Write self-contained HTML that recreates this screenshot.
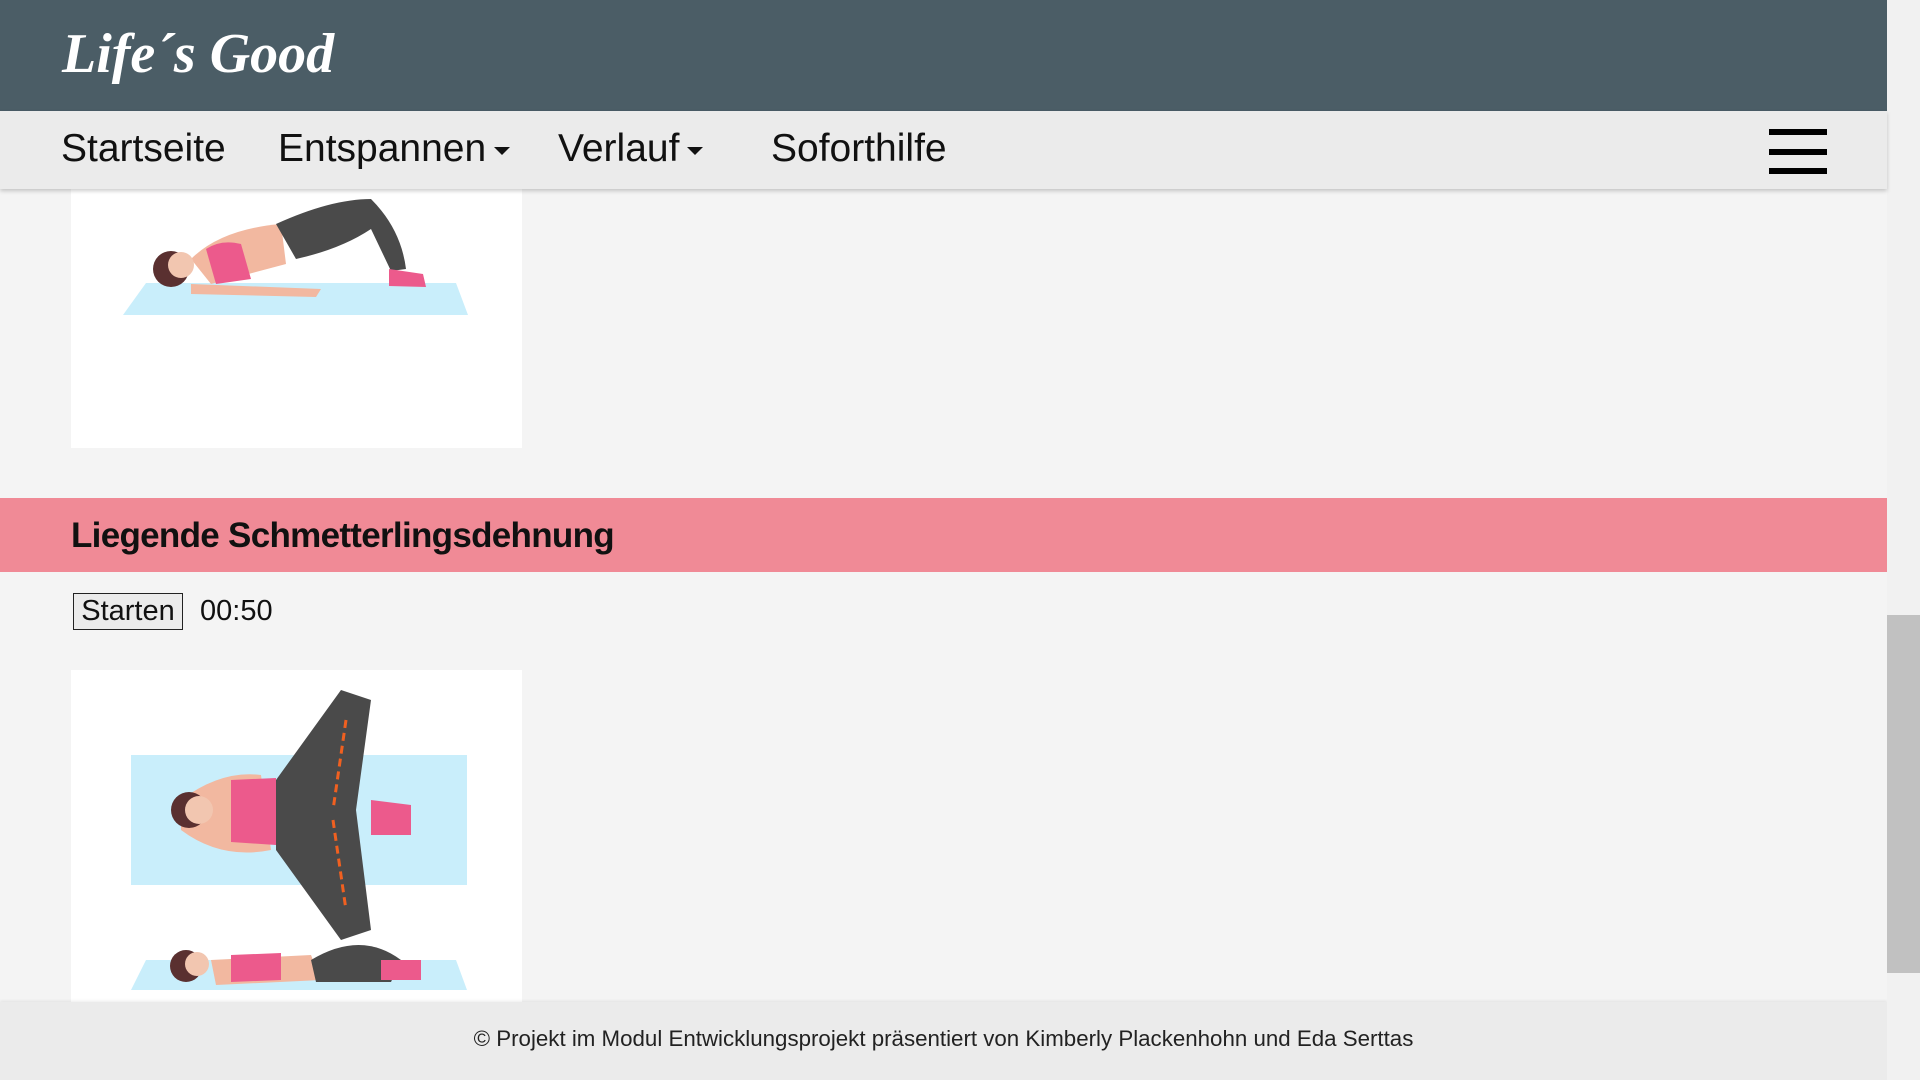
<!DOCTYPE html>
<html><head><meta charset="utf-8"><style>
*{margin:0;padding:0;box-sizing:border-box}
body{width:1920px;height:1080px;overflow:hidden;background:#f4f4f4;font-family:"Liberation Sans",sans-serif;position:relative}
.hd{position:absolute;left:0;top:0;width:1887px;height:111px;background:#4b5d66}
.logo{position:absolute;left:62px;top:22px;color:#fff;font:italic bold 56px "Liberation Serif",serif;letter-spacing:0px}
.nav{position:absolute;left:0;top:111px;width:1887px;height:78px;background:#ebebeb;box-shadow:0 2px 4px rgba(0,0,0,.2);z-index:2}
.nav span{position:absolute;top:16px;font-size:39px;color:#111}
.car{display:inline-block;width:0;height:0;border-left:8px solid transparent;border-right:8px solid transparent;border-top:8px solid #111;vertical-align:middle;margin-left:8px}
.bar{position:absolute;left:1769px;width:58px;height:6px;background:#000}
.img{position:absolute;left:71px;width:451px;background:#fff}
.band{position:absolute;left:0;top:498px;width:1887px;height:74px;background:#f08a96}
.band h2{position:absolute;left:71px;top:18px;font-size:35px;font-weight:bold;color:#111;letter-spacing:-0.7px}
.btn{position:absolute;left:73px;top:593px;width:110px;height:37px;border:1.5px solid #222;background:#ebebeb;font-size:29px;text-align:center;line-height:34px;color:#111}
.time{position:absolute;left:200px;top:595px;font-size:29px;color:#111}
.ft{position:absolute;left:0;top:1002px;width:1887px;height:78px;background:#ebebeb;text-align:center;font-size:22.3px;color:#222;line-height:74px;box-shadow:0 -1px 3px rgba(0,0,0,.08)}
.sb{position:absolute;right:0;top:0;width:33px;height:1080px;background:#f1f1f1}
.th{position:absolute;right:0;top:615px;width:33px;height:358px;background:#c1c1c1}
</style></head><body>
<div class="hd"><div class="logo">Life´s Good</div></div>
<div class="nav">
<span style="left:61px">Startseite</span>
<span style="left:278px">Entspannen<i class="car"></i></span>
<span style="left:558px">Verlauf<i class="car"></i></span>
<span style="left:771px">Soforthilfe</span>
<div class="bar" style="top:18px"></div><div class="bar" style="top:38px"></div><div class="bar" style="top:57px"></div>
</div>
<div class="img" style="top:189px;height:259px">
<svg width="451" height="259">
<polygon points="52,126 397,126 385,94 75,94" fill="#c9eefb"/>
<path d="M120,70 Q150,40 210,35 L215,75 L140,95 Z" fill="#f2b8a0"/>
<path d="M135,60 Q150,50 170,55 L180,90 L145,95 Z" fill="#ec5a8c"/>
<path d="M205,35 Q260,10 300,10 Q330,40 335,80 L320,82 L300,40 Q270,60 225,70 Z" fill="#4a4a4a"/>
<path d="M120,95 L250,100 L245,108 L120,105 Z" fill="#f2b8a0"/>
<path d="M318,80 L352,85 L355,98 L318,97 Z" fill="#ec5a8c"/>
<circle cx="100" cy="80" r="18" fill="#5a3030"/>
<circle cx="110" cy="76" r="13" fill="#f2c6b0"/>
</svg></div>
<div class="band"><h2>Liegende Schmetterlingsdehnung</h2></div>
<div class="btn">Starten</div><div class="time">00:50</div>
<div class="img" style="top:670px;height:332px">
<svg width="451" height="332">
<rect x="60" y="85" width="336" height="130" fill="#c9eefb"/>
<path d="M110,130 Q150,100 190,105 L200,180 Q150,190 110,160 Z" fill="#f2b8a0"/>
<path d="M160,110 L205,108 L205,175 L160,172 Z" fill="#ec5a8c"/>
<path d="M205,110 L270,20 L300,30 L285,140 L300,260 L270,270 L205,180 Z" fill="#4a4a4a"/>
<path d="M300,130 L340,135 L340,165 L300,165 Z" fill="#ec5a8c"/>
<circle cx="118" cy="140" r="18" fill="#5a3030"/>
<circle cx="128" cy="140" r="14" fill="#f2c6b0"/>
<line x1="275" y1="50" x2="262" y2="140" stroke="#f06020" stroke-width="3" stroke-dasharray="8 5"/>
<line x1="262" y1="150" x2="275" y2="240" stroke="#f06020" stroke-width="3" stroke-dasharray="8 5"/>
<polygon points="60,320 396,320 385,290 75,290" fill="#c9eefb"/>
<path d="M140,290 L240,285 L250,310 L145,315 Z" fill="#f2b8a0"/>
<path d="M160,285 L210,283 L210,310 L160,312 Z" fill="#ec5a8c"/>
<path d="M240,290 Q290,260 330,290 L320,312 L245,312 Z" fill="#4a4a4a"/>
<path d="M310,290 L350,290 L350,310 L310,310 Z" fill="#ec5a8c"/>
<circle cx="115" cy="296" r="16" fill="#5a3030"/>
<circle cx="126" cy="294" r="12" fill="#f2c6b0"/>
</svg></div>
<div class="ft">© Projekt im Modul Entwicklungsprojekt präsentiert von Kimberly Plackenhohn und Eda Serttas</div>
<div class="sb"><div class="th"></div></div>
</body></html>
